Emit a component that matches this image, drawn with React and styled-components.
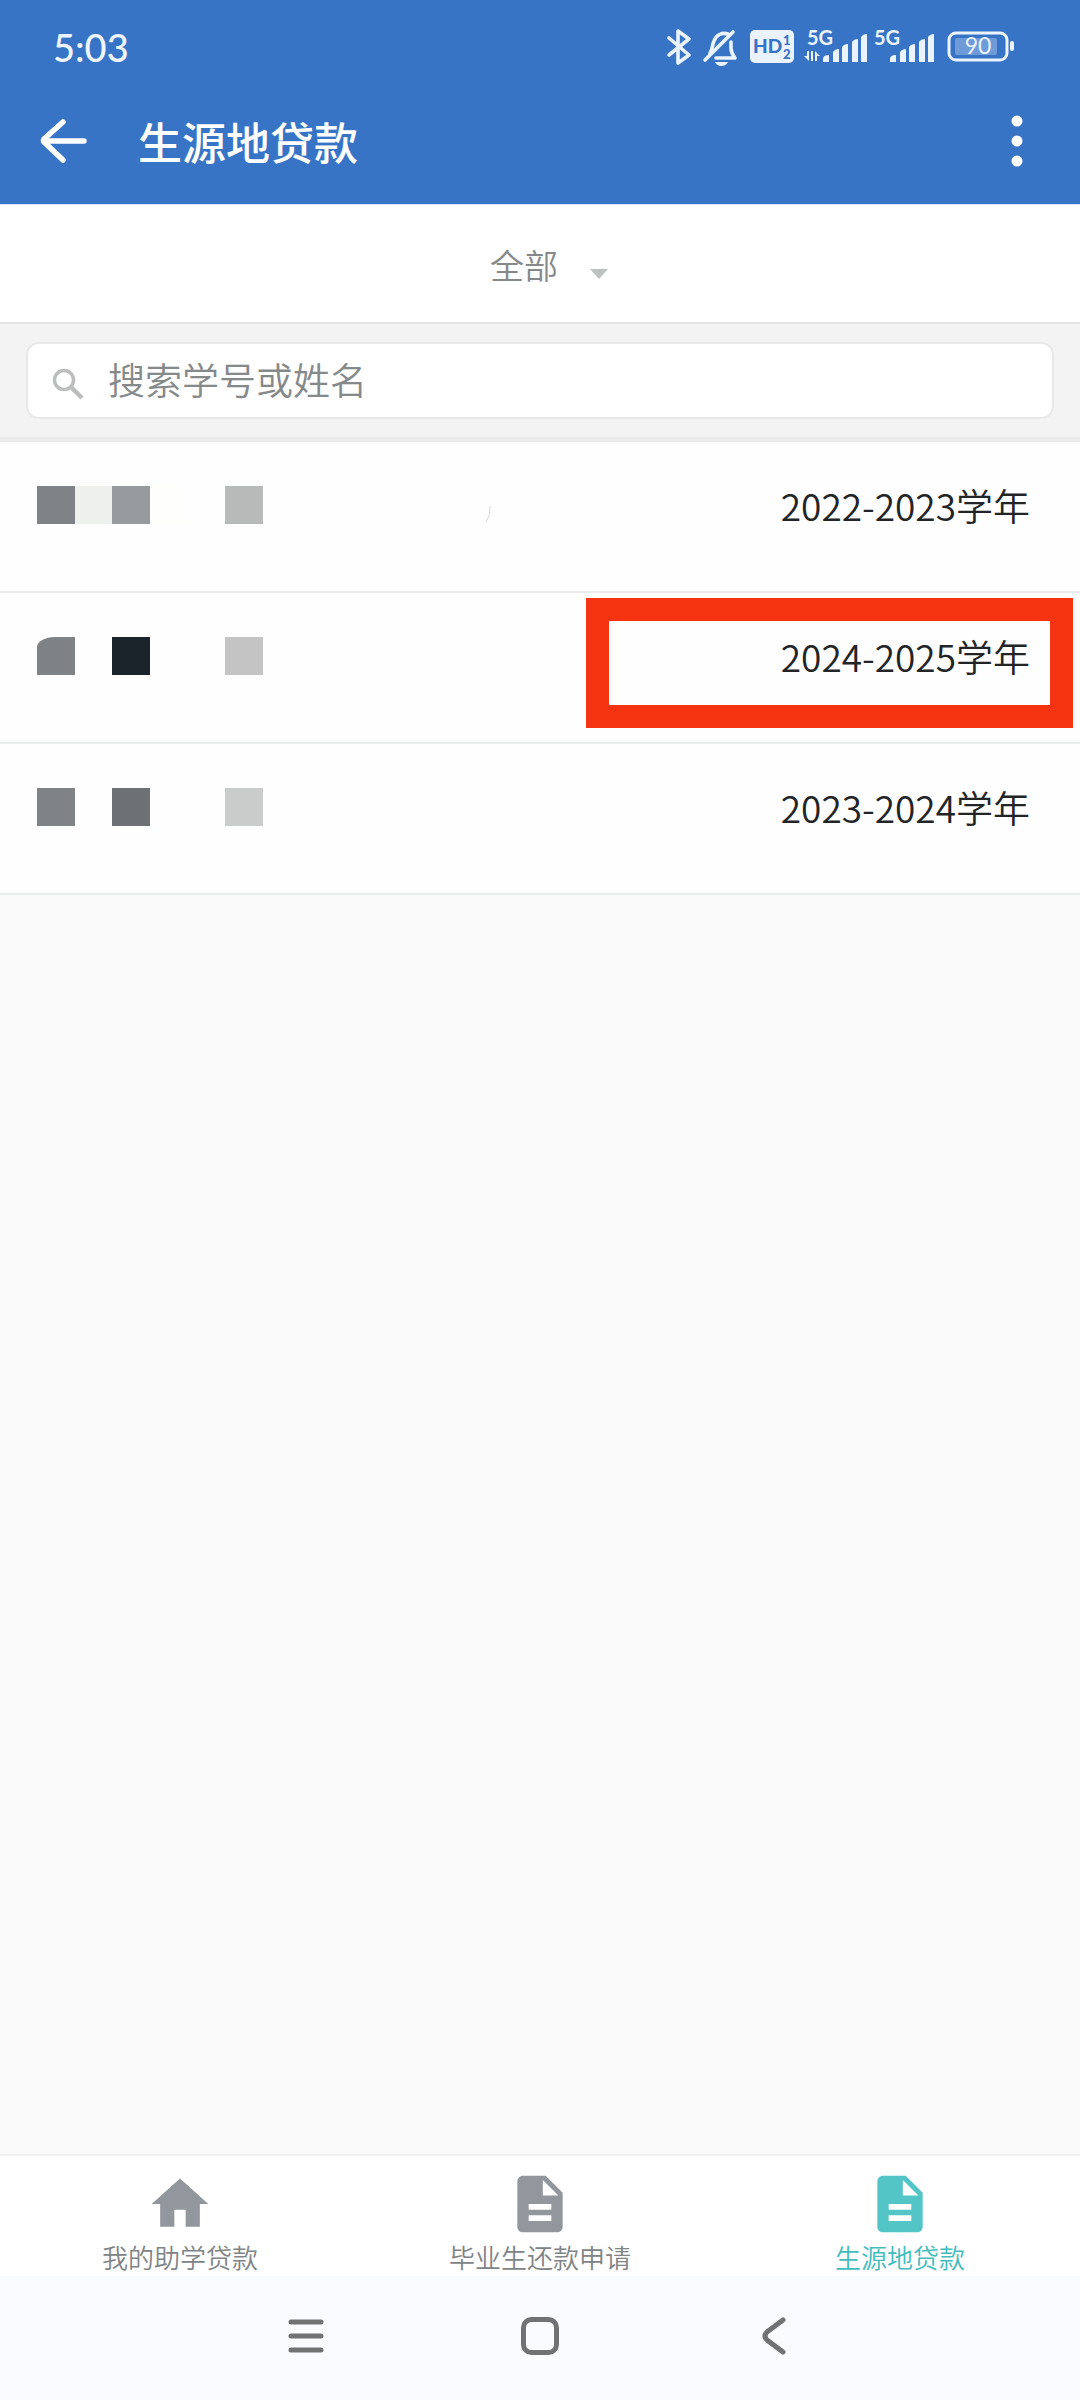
import React from 'react';
import styled, { createGlobalStyle } from 'styled-components';

const GlobalStyle = createGlobalStyle`
  * {
    box-sizing: border-box;
  }

  body {
    margin: 0;
    background-color: #f9f9f9;
    font-family: "Noto Sans CJK SC", sans-serif;
    color: #222426;
  }

  button, input, select {
    font-family: inherit;
    border: 0;
    padding: 0;
    background: none;
  }
`;

const Page = styled.div`
  display: flex;
  flex-direction: column;
  min-height: 100vh;
`;

const Header = styled.header`
  height: 204px;
  background-color: #3874c6;
  color: #fff;
`;

const StatusBar = styled.div`
  display: flex;
  align-items: center;
  justify-content: space-between;
  height: 94px;
  padding: 0 63px 0 53px;
`;

const Time = styled.span`
  font-family: Lato, sans-serif;
  font-size: 38px;
  line-height: 48px;
  font-weight: 500;
  color: #eef5ff;
`;

const TitleBar = styled.div`
  display: flex;
  align-items: center;
  height: 94px;
  padding: 0 36px;
`;

const IconButton = styled.button`
  display: flex;
  align-items: center;
  justify-content: center;
  width: 54px;
  height: 60px;
  color: inherit;
`;

const Title = styled.h1`
  flex: 1;
  margin: 0 0 0 48px;
  font-size: 44px;
  line-height: 60px;
  font-weight: 500;
`;

const FilterBar = styled.div`
  display: flex;
  align-items: center;
  justify-content: center;
  height: 120px;
  padding: 2px 0 0 18px;
  background-color: #fff;
  border-top: 1px solid #dce9fa;
  border-bottom: 2px solid #e5e5e5;
`;

const FilterSelect = styled.select`
  appearance: none;
  width: 100px;
  height: 60px;
  font-size: 34px;
  font-weight: 350;
  color: #85898a;
`;

const Caret = styled.span`
  margin-top: 18px;
  border: 9px solid transparent;
  border-top: 10px solid #bfc0c0;
  border-bottom: 0;
  pointer-events: none;
`;

const SearchBar = styled.div`
  padding: 18px 26px;
  background-color: #f3f3f3;
  border-bottom: 5px solid #eaeaea;
`;

const SearchField = styled.label`
  display: flex;
  align-items: center;
  gap: 24px;
  height: 77px;
  padding: 0 24px 4px;
  background-color: #fff;
  border: 2px solid #e8e8e8;
  border-radius: 13px;

  svg {
    flex: none;
    margin-top: 10px;
  }
`;

const SearchInput = styled.input`
  flex: 1;
  min-width: 0;
  height: 60px;
  font-size: 37px;
  font-weight: 350;
  color: #222426;
  outline: none;

  &::placeholder {
    color: #85898a;
    opacity: 1;
  }
`;

const List = styled.ul`
  flex: 1;
  margin: 0;
  padding: 0;
  list-style: none;
`;

const Row = styled.li`
  position: relative;
  display: flex;
  align-items: flex-start;
  height: 151px;
  padding: 36px 50px 0 37px;
  background-color: #fefefe;
  border-bottom: 2px solid #ebecec;
`;

const Mosaic = styled.div`
  display: grid;
  grid-template-columns: repeat(6, 1fr);
  width: 226px;
  height: 38px;
  margin-top: 8px;
`;

const Tile = styled.span`
  background-color: ${props => props.$color || 'transparent'};
  border-top-left-radius: ${props => (props.$clipped ? '18px 10px' : '0')};
`;

const Smudge = styled.svg`
  margin: 24px 0 0 221px;
`;

const Year = styled.span`
  margin-left: auto;
  font-size: 37px;
  line-height: 54px;
  font-weight: 350;
`;

const Marker = styled.div`
  position: absolute;
  top: 5px;
  right: 7px;
  width: 487px;
  height: 130px;
  border: 23px solid #f53311;
`;

const TabBar = styled.nav`
  display: grid;
  grid-template-columns: repeat(3, 1fr);
  height: 122px;
  background-color: #fff;
  border-top: 2px solid #f0f0f0;
`;

const Tab = styled.a`
  display: flex;
  flex-direction: column;
  align-items: center;
  padding-top: 14px;
  font-size: 26px;
  line-height: 38px;
  font-weight: 350;
  text-decoration: none;
  color: ${props => (props.$active ? '#43bcbd' : '#808486')};

  svg {
    flex: none;
    width: 68px;
    height: 68px;
    fill: ${props => (props.$active ? '#54c5c6' : '#92969d')};
  }
`;

const SystemNav = styled.div`
  display: flex;
  align-items: center;
  justify-content: center;
  height: 124px;
  padding-bottom: 4px;
  background-color: #fafbfe;
`;

const SystemButton = styled.button`
  display: flex;
  align-items: center;
  justify-content: center;
  width: 234px;
  height: 72px;
  color: #717273;
`;

const HOME = 'M10 20v-6h4v6h5v-8h3L12 3 2 12h3v8z';
const DOC = 'M14 2H6c-1.1 0-1.99.9-1.99 2L4 20c0 1.1.89 2 1.99 2H18c1.1 0 2-.9 2-2V8l-6-6zm2 16H8v-2h8v2zm0-4H8v-2h8v2zm-3-5V3.5L18.5 9H13z';

const records = [
  {
    year: '2022-2023学年',
    tiles: ['#7f8387', '#eef0ed', '#979b9e', '#fefefc', null, '#b8bab9'],
    smudge: true,
  },
  {
    year: '2024-2025学年',
    tiles: ['#7f8285', null, '#1b242a', null, null, '#c3c4c3'],
    clipped: true,
    marked: true,
  },
  {
    year: '2023-2024学年',
    tiles: ['#7f8386', null, '#6d7173', null, null, '#cacccb'],
  },
];

const tabs = [
  { label: '我的助学贷款', icon: HOME },
  { label: '毕业生还款申请', icon: DOC },
  { label: '生源地贷款', icon: DOC, active: true },
];

const Bars = ({ x }) => (
  <g transform={`translate(${x} 0)`}>
    <path d="M0 39v-3q0-4 6-4v7zM10 39V29q2-3 6-3v13zM19 39V24q2-3 6-3v18zM29 39V19q2-3 6-3v23zM38 39V14q2-3 6-3v28z" />
  </g>
);

const StatusIcons = () => (
  <svg width="352" height="48" viewBox="0 0 352 48" fill="#eaf3ff" fontFamily="Lato, sans-serif">
    <g fill="none" stroke="#eaf3ff" strokeWidth="3.6" strokeLinecap="round" strokeLinejoin="round">
      <path d="M4 15l20 17-11 8V8l11 8L4 32" />
      <path d="M40 37L68 9M45 30c3-4 2-8 4-12 2-6 8-9 14-7M66 19v6q0 5 4 10H51" />
    </g>
    <path d="M50 39h13q-2 4-6.500 4T50 39z" />
    <rect x="85" y="7" width="44" height="33" rx="5" />
    <g fill="#3874c6" fontWeight="900">
      <text x="88" y="30" fontSize="19">HD</text>
      <text x="118" y="22" fontSize="13">1</text>
      <text x="118" y="36" fontSize="13">2</text>
    </g>
    <text x="142" y="22" fontSize="20" fontWeight="700">5G</text>
    <path d="M144 28v10l-5-5h3v-5zM146 28h2v10h-2zM150 28l5 5h-3v5h-2z" />
    <Bars x={158} />
    <text x="209" y="22" fontSize="20" fontWeight="700">5G</text>
    <Bars x={225} />
    <rect x="284" y="10" width="58" height="27" rx="7" fill="none" stroke="#eaf3ff" strokeWidth="3" />
    <rect x="290" y="15" width="42" height="17" rx="2" opacity="0.3" />
    <rect x="345" y="18" width="4" height="10" rx="2" />
    <text x="313" y="31" fontSize="23" textAnchor="middle">90</text>
  </svg>
);

const App = () => {
  const [keyword, setKeyword] = React.useState('');

  return (
    <Page>
      <GlobalStyle />
      <Header>
        <StatusBar>
          <Time>5:03</Time>
          <StatusIcons />
        </StatusBar>
        <TitleBar>
          <IconButton aria-label="返回">
            <svg width="48" height="44" viewBox="0 0 48 44" fill="none" stroke="currentColor" strokeWidth="5.5" strokeLinecap="round" strokeLinejoin="round">
              <path d="M24 3L5 20q-1 2 0 3l19 18M5 22h40" />
            </svg>
          </IconButton>
          <Title>生源地贷款</Title>
          <IconButton aria-label="更多">
            <svg width="12" height="52" viewBox="0 0 12 52" fill="currentColor">
              <circle cx="6" cy="6" r="5.500" />
              <circle cx="6" cy="26" r="5.500" />
              <circle cx="6" cy="46" r="5.500" />
            </svg>
          </IconButton>
        </TitleBar>
      </Header>

      <FilterBar>
        <FilterSelect aria-label="筛选">
          <option>全部</option>
        </FilterSelect>
        <Caret />
      </FilterBar>

      <SearchBar>
        <SearchField>
          <svg width="32" height="32" viewBox="0 0 32 32" fill="none" stroke="#bcbebe">
            <circle cx="12" cy="12" r="9.500" strokeWidth="3.500" />
            <path d="M19 19l11 11" strokeWidth="4.500" />
          </svg>
          <SearchInput
            aria-label="搜索"
            placeholder="搜索学号或姓名"
            value={keyword}
            onChange={e => setKeyword(e.target.value)}
          />
        </SearchField>
      </SearchBar>

      <List>
        {records.map(record => (
          <Row key={record.year}>
            <Mosaic>
              {record.tiles.map((color, i) => (
                <Tile key={i} $color={color} $clipped={record.clipped && i === 0} />
              ))}
            </Mosaic>
            {record.smudge && (
              <Smudge width="8" height="22" viewBox="0 0 8 22" fill="none" stroke="#d5d6d6">
                <path d="M6 4q1 9-4 16" />
              </Smudge>
            )}
            <Year>{record.year}</Year>
            {record.marked && <Marker />}
          </Row>
        ))}
      </List>

      <TabBar>
        {tabs.map(tab => (
          <Tab key={tab.label} href="#" $active={tab.active}>
            <svg viewBox="0 0 24 24">
              <path d={tab.icon} />
            </svg>
            {tab.label}
          </Tab>
        ))}
      </TabBar>

      <SystemNav>
        <SystemButton aria-label="菜单">
          <svg width="36" height="36" viewBox="0 0 36 36" stroke="currentColor" strokeWidth="5" strokeLinecap="round">
            <path d="M3 4h30M3 18h30M3 32h30" />
          </svg>
        </SystemButton>
        <SystemButton aria-label="主页">
          <svg width="38" height="38" viewBox="0 0 38 38" fill="none" stroke="currentColor" strokeWidth="5">
            <rect x="2.500" y="2.500" width="33" height="33" rx="8" />
          </svg>
        </SystemButton>
        <SystemButton aria-label="后退">
          <svg width="24" height="38" viewBox="0 0 24 38" fill="none" stroke="currentColor" strokeWidth="5" strokeLinecap="round">
            <path d="M21 3L5 15q-4 4 0 8l16 12" />
          </svg>
        </SystemButton>
      </SystemNav>
    </Page>
  );
};

export default App;
